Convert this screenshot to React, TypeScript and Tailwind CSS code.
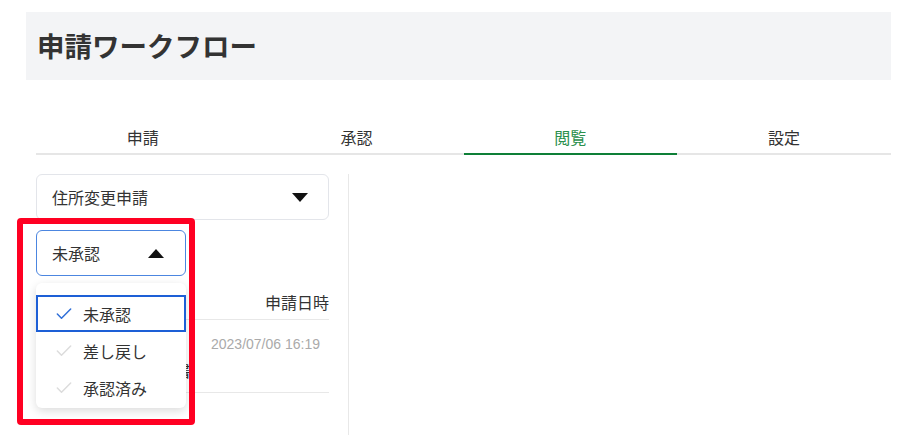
import React from "react";

const font = { fontFamily: '"Noto Sans CJK JP", "Noto Sans", sans-serif' };

function Check({ color }: { color: string }) {
  return (
    <svg width="20" height="20" viewBox="0 0 24 24" fill="none" stroke={color} strokeWidth="1.8" strokeLinecap="round" strokeLinejoin="round">
      <path d="M20 6 9 17l-5-5" />
    </svg>
  );
}

function Tri({ up }: { up?: boolean }) {
  return (
    <svg width="16" height="9" viewBox="0 0 16 9">
      {up ? <path d="M8 0 16 9H0Z" fill="#111" /> : <path d="M0 0h16L8 9Z" fill="#111" />}
    </svg>
  );
}

export default function App() {
  const tabs = ["申請", "承認", "閲覧", "設定"];
  return (
    <div className="relative w-[898px] h-[447px] bg-white overflow-hidden text-[#333]" style={font}>
      <div className="ml-[26px] mt-[12px] w-[865px] h-[68px] bg-[#f3f4f6] flex items-center pl-[11px]">
        <h1 className="text-[27.5px] font-bold text-[#333] leading-none">申請ワークフロー</h1>
      </div>

      <div className="ml-[36px] mt-[41px] w-[855px] flex border-b-2 border-[#e6e6e6]">
        {tabs.map((t, i) => (
          <div
            key={t}
            className={
              i === 2
                ? "flex-1 h-[34px] -mb-[2px] border-b-2 border-[#0e7f37] flex items-center justify-center text-[16px] text-[#2a8f4c]"
                : "flex-1 h-[32px] flex items-center justify-center text-[16px] text-[#333]"
            }
          >
            {t}
          </div>
        ))}
      </div>

      <div className="ml-[36px] mt-[19px] flex">
        <div className="w-[293px] flex flex-col">
          <div className="h-[46px] border border-[#e3e5ea] rounded-[6px] flex items-center justify-between pl-[15px] pr-[20px] text-[16px]">
            <span>住所変更申請</span>
            <Tri />
          </div>
          <div className="mt-[10px] w-[150px] h-[46px] border border-[#4c86e0] rounded-[6px] flex items-center justify-between pl-[15px] pr-[21px] text-[16px]">
            <span>未承認</span>
            <Tri up />
          </div>
          <div className="mt-[15px] h-[29px] border-b border-[#e8e8e8] flex justify-end items-start text-[16px] leading-[22px]">
            <span>申請日時</span>
          </div>
          <div className="h-[73px] border-b border-[#e8e8e8] flex">
            <div className="w-[155px] flex flex-col pt-[39px] text-[16px] leading-[22px] text-right">
              <span>書</span>
            </div>
            <div className="flex-1 pt-[14px] pr-[9px] text-right text-[14px] leading-[20px] text-[#aaa]" style={{ fontFamily: '"Liberation Sans", Arial, sans-serif' }}>
              2023/07/06 16:19
            </div>
          </div>
        </div>
        <div className="ml-[19px] w-px h-[261px] bg-[#e8e8e8]" />
      </div>

      <div className="absolute left-[36px] top-[283px] w-[150px] h-[125px] bg-white rounded-[6px] shadow-[0_3px_10px_rgba(0,0,0,0.14)] pt-[12px] text-[16px]">
        <div className="h-[37px] border-2 border-[#1d5fd6] flex items-center pl-[16px] gap-[9px]">
          <Check color="#2f6fd8" />
          <span>未承認</span>
        </div>
        <div className="h-[37px] flex items-center pl-[18px] gap-[9px]">
          <Check color="#dcdcdc" />
          <span>差し戻し</span>
        </div>
        <div className="h-[37px] flex items-center pl-[18px] gap-[9px]">
          <Check color="#dcdcdc" />
          <span>承認済み</span>
        </div>
      </div>

      <div className="absolute left-[17px] top-[218px] w-[178px] h-[207px] border-[6px] border-[#ff0022] rounded-[4px]" />
    </div>
  );
}
